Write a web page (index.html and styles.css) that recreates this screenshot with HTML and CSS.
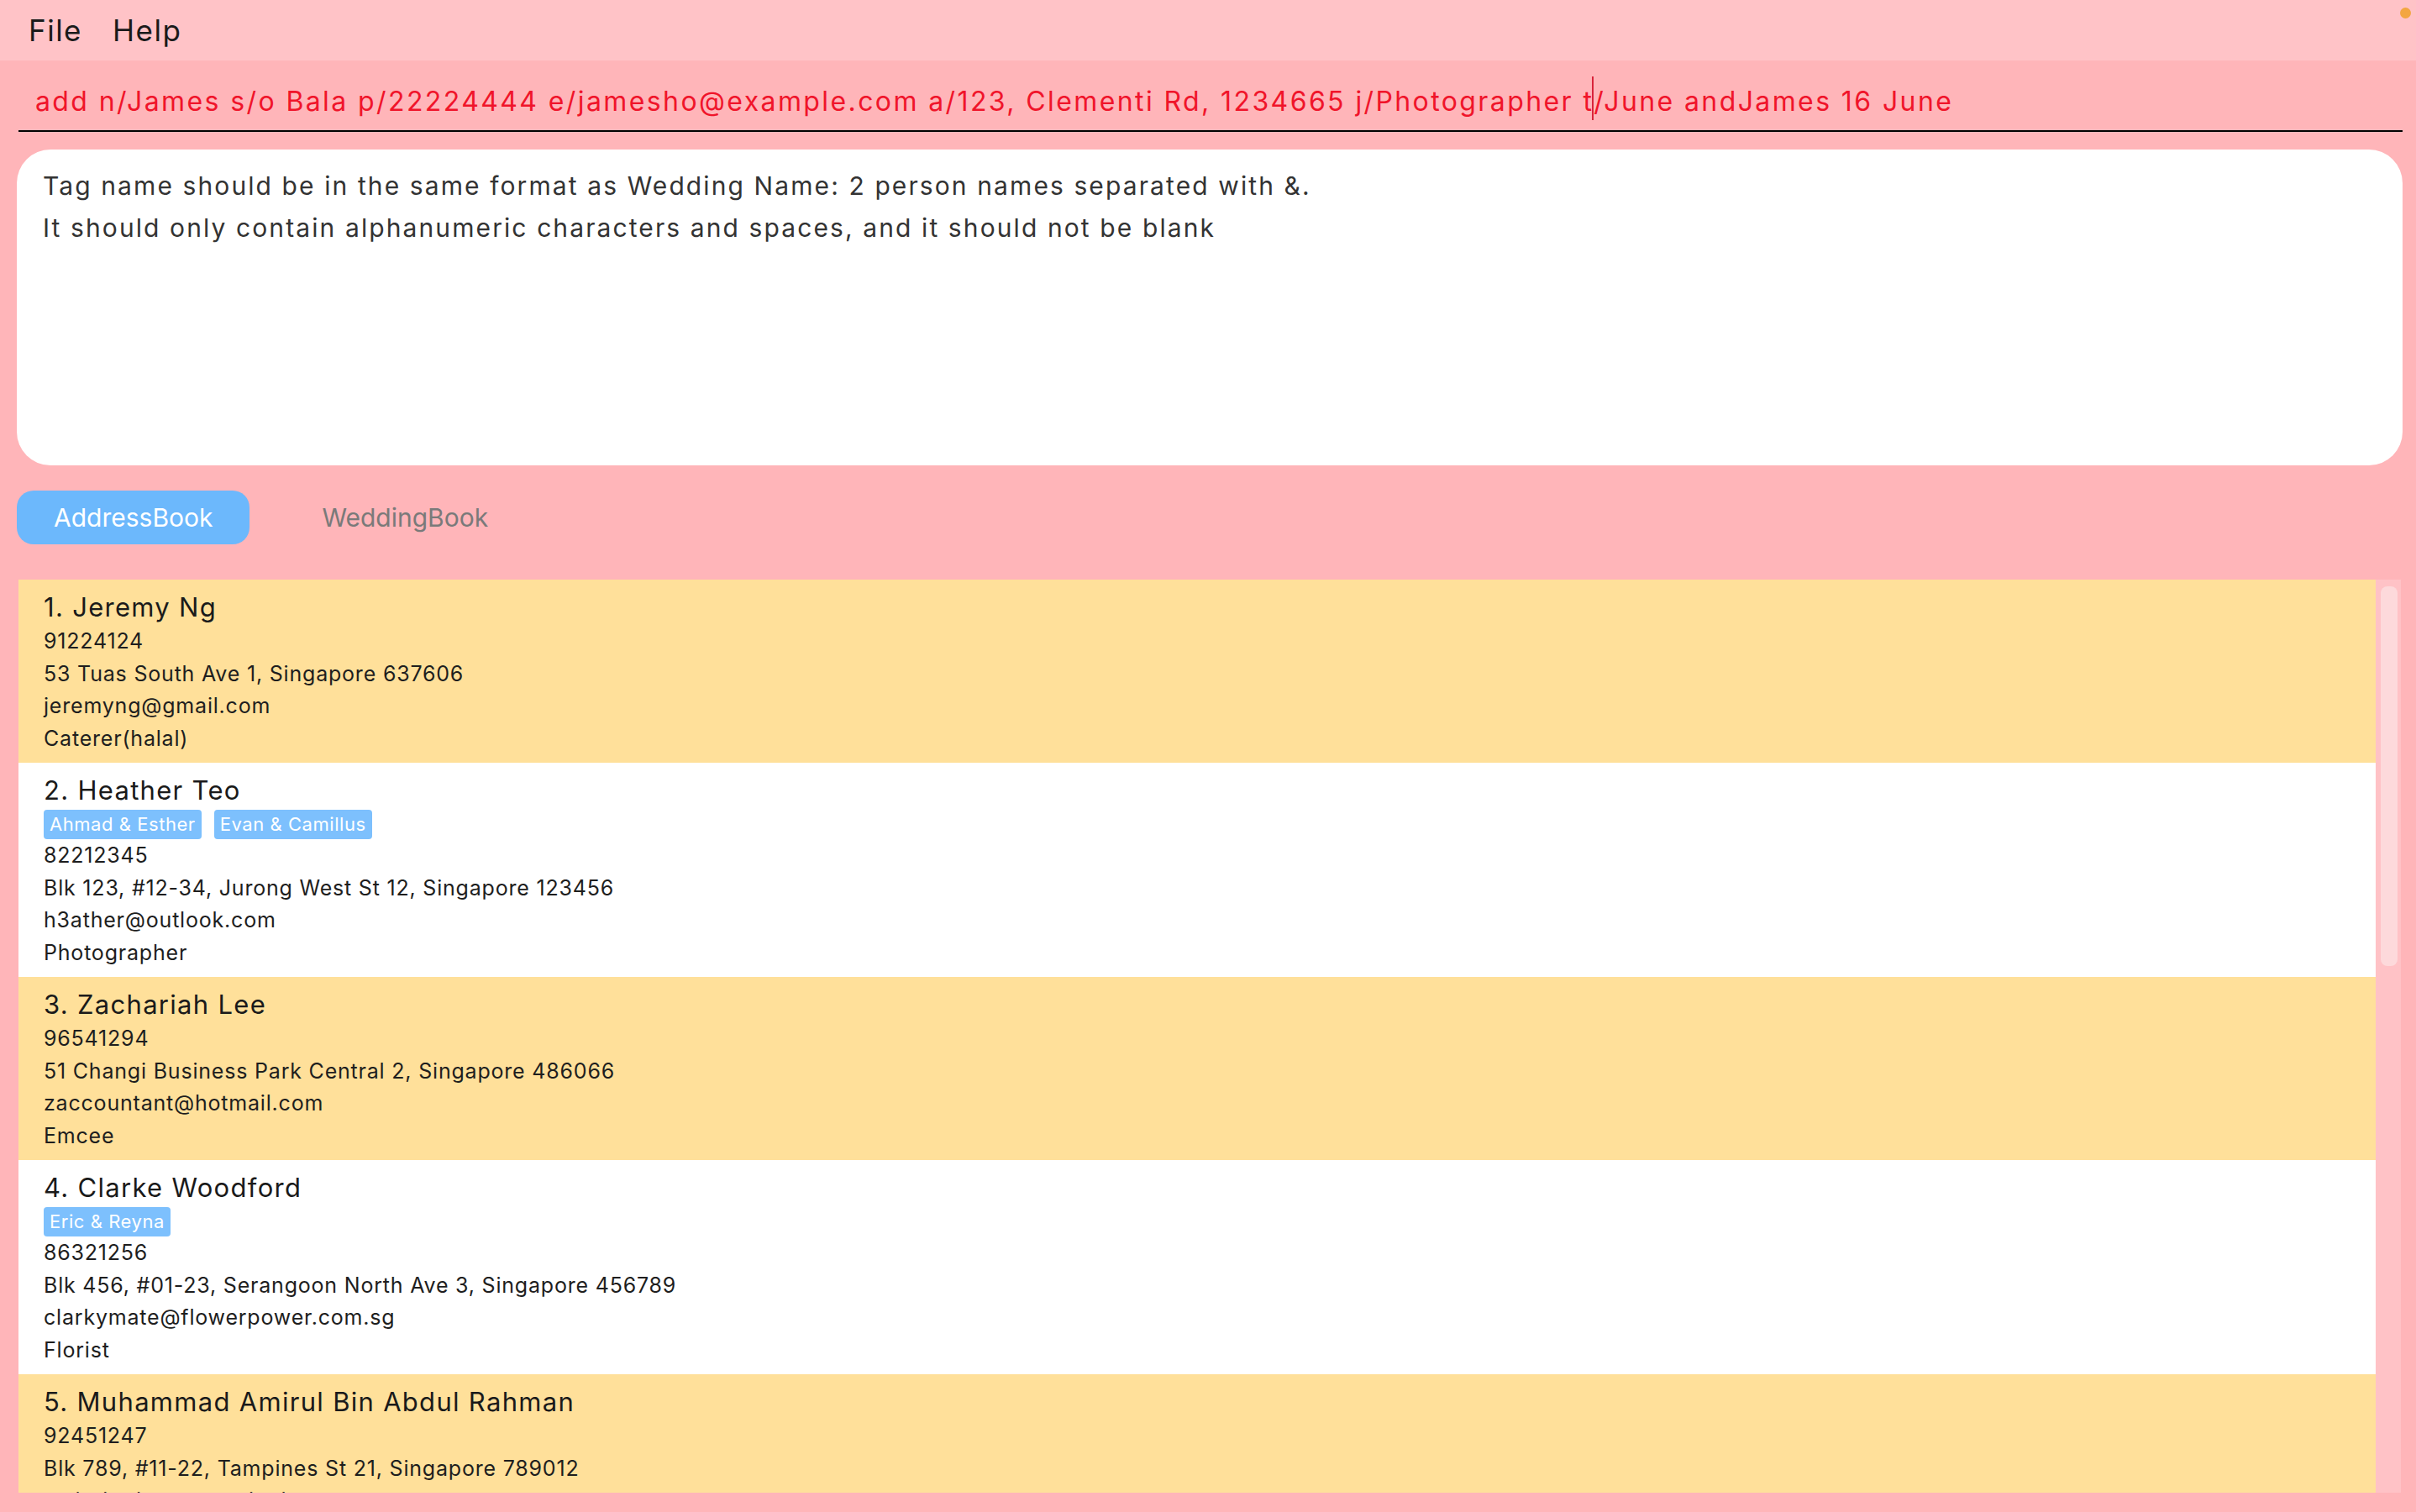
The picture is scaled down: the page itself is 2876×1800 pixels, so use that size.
FILE: index.html
```html
<!DOCTYPE html>
<html>
<head>
<meta charset="utf-8">
<link rel="stylesheet" href="styles.css">
</head>
<body>
<div class="menubar">
  <span class="menu-item">File</span>
  <span class="menu-item">Help</span>
  <span class="status-dot"></span>
</div>
<div class="main">
  <div class="command">add n/James s/o Bala p/22224444 e/jamesho@example.com a/123, Clementi Rd, 1234665 j/Photographer t<span class="caret"></span>/June andJames 16 June</div>
  <div class="result">
    <div class="result-line">Tag name should be in the same format as Wedding Name: 2 person names separated with &amp;.</div>
    <div class="result-line">It should only contain alphanumeric characters and spaces, and it should not be blank</div>
  </div>
  <div class="tabs">
    <div class="tab tab-active">AddressBook</div>
    <div class="tab">WeddingBook</div>
  </div>
  <div class="list">
    <div class="cards">
      <div class="card card-odd">
        <div class="name">1. Jeremy Ng</div>
        <div class="detail">91224124</div>
        <div class="detail">53 Tuas South Ave 1, Singapore 637606</div>
        <div class="detail">jeremyng@gmail.com</div>
        <div class="detail">Caterer(halal)</div>
      </div>
      <div class="card card-even">
        <div class="name">2. Heather Teo</div>
        <div class="tags"><span class="tag">Ahmad &amp; Esther</span><span class="tag">Evan &amp; Camillus</span></div>
        <div class="detail">82212345</div>
        <div class="detail">Blk 123, #12-34, Jurong West St 12, Singapore 123456</div>
        <div class="detail">h3ather@outlook.com</div>
        <div class="detail">Photographer</div>
      </div>
      <div class="card card-odd">
        <div class="name">3. Zachariah Lee</div>
        <div class="detail">96541294</div>
        <div class="detail">51 Changi Business Park Central 2, Singapore 486066</div>
        <div class="detail">zaccountant@hotmail.com</div>
        <div class="detail">Emcee</div>
      </div>
      <div class="card card-even">
        <div class="name">4. Clarke Woodford</div>
        <div class="tags"><span class="tag">Eric &amp; Reyna</span></div>
        <div class="detail">86321256</div>
        <div class="detail">Blk 456, #01-23, Serangoon North Ave 3, Singapore 456789</div>
        <div class="detail">clarkymate@flowerpower.com.sg</div>
        <div class="detail">Florist</div>
      </div>
      <div class="card card-odd">
        <div class="name">5. Muhammad Amirul Bin Abdul Rahman</div>
        <div class="detail">92451247</div>
        <div class="detail">Blk 789, #11-22, Tampines St 21, Singapore 789012</div>
        <div class="detail">amirul.rahman@outlook.com</div>
        <div class="detail">Videographer</div>
      </div>
    </div>
    <div class="scrollbar"><div class="thumb"></div></div>
  </div>
</div>
</body>
</html>
```
FILE: styles.css
```css
* { box-sizing: border-box; }
html, body { margin: 0; padding: 0; }
body {
  width: 2876px;
  height: 1800px;
  overflow: hidden;
  background: #ffb5b9;
  font-family: Inter, "Open Sans", sans-serif;
  color: #1e1e1e;
}
.menubar {
  position: relative;
  height: 72px;
  background: #ffc3c7;
  display: flex;
  align-items: center;
  padding-left: 34px;
  gap: 36px;
}
.menu-item {
  font-size: 35px;
  line-height: 72px;
  letter-spacing: 1.5px;
  color: #1a1a1a;
}
.status-dot {
  position: absolute;
  right: 6px;
  top: 9px;
  width: 13px;
  height: 13px;
  border-radius: 50%;
  background: #f3a640;
}
.main {
  display: flex;
  flex-direction: column;
}
.command {
  height: 85px;
  margin: 0 16px 0 22px;
  padding: 24px 0 0 20px;
  border-bottom: 2px solid #000;
  font-size: 32px;
  line-height: 50px;
  letter-spacing: 2.4px;
  color: #f0142a;
  white-space: nowrap;
  overflow: hidden;
}
.caret {
  position: relative;
  display: inline-block;
  width: 0;
  height: 0;
}
.caret::after {
  content: "";
  position: absolute;
  left: -2px;
  bottom: -11px;
  width: 2px;
  height: 52px;
  background: #d8243a;
}
.result {
  margin: 21px 16px 0 20px;
  height: 376px;
  background: #fff;
  border-radius: 40px;
  padding: 18px 31px;
  color: #333;
  font-size: 30px;
  line-height: 50px;
  letter-spacing: 2.1px;
}
.tabs {
  display: flex;
  gap: 42px;
  margin: 30px 0 0 20px;
}
.tab {
  height: 64px;
  line-height: 64px;
  padding: 0 44px;
  font-size: 30px;
  color: #7a7a7a;
  border-radius: 20px;
}
.tab-active {
  background: #6cb8fc;
  color: #fff;
}
.list {
  display: flex;
  margin: 42px 18px 0 22px;
  height: 1087px;
  overflow: hidden;
}
.cards {
  flex: 1;
  display: flex;
  flex-direction: column;
  overflow: hidden;
}
.card {
  flex: none;
  padding: 11px 30px 10px;
}
.card-odd { background: #ffe09a; }
.card-even { background: #fff; }
.name {
  font-size: 31px;
  line-height: 43px;
  letter-spacing: 1.3px;
  color: #1a1a1a;
}
.detail {
  font-size: 25px;
  line-height: 38.5px;
  letter-spacing: 0.8px;
  color: #1e1e1e;
}
.tags {
  display: flex;
  gap: 15px;
  margin-top: 2px;
  height: 35px;
}
.tag {
  height: 35px;
  line-height: 35px;
  padding: 0 7px;
  font-size: 22px;
  letter-spacing: 0.55px;
  color: #fff;
  background: #7dc0fd;
  border-radius: 4px;
}
.scrollbar {
  flex: none;
  width: 30px;
  background: #ffc2c6;
  padding: 8px 4px 0 6px;
}
.thumb {
  width: 20px;
  height: 452px;
  border-radius: 8px;
  background: #fdd9db;
}
```
